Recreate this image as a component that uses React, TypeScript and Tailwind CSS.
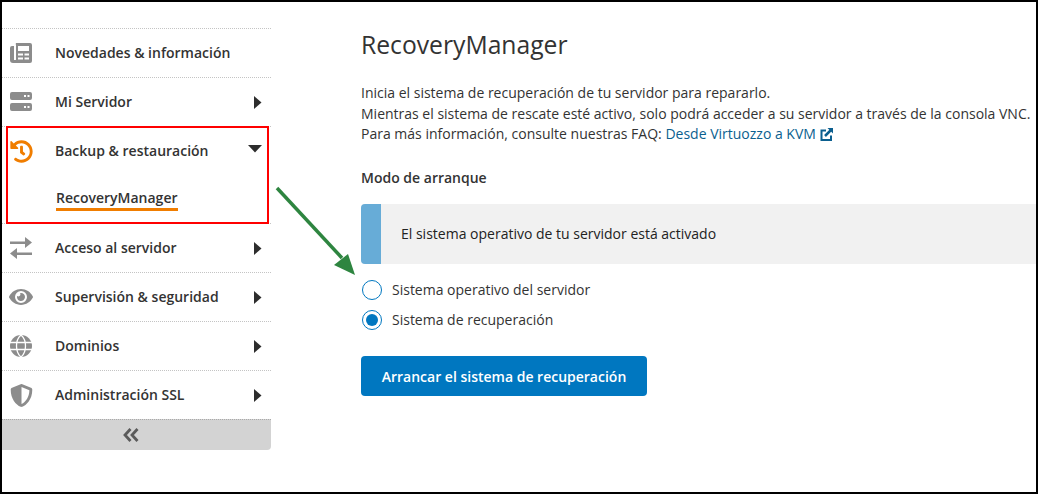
import React from 'react';
import { FaHistory, FaEye, FaShieldAlt } from 'react-icons/fa';

const NewsIcon = () => (
  <svg width="22" height="20" viewBox="0 0 22 20" fill="#8c8c8c">
    <path fillRule="evenodd" d="M6 0h14a2 2 0 0 1 2 2v16a2 2 0 0 1-2 2H3a3 3 0 0 1-3-3V5a2 2 0 0 1 2-2h2v14h1.500a.5.5 0 0 0 .5-.5V2a2 2 0 0 1 0-2ZM8 3v5h11V3H8Zm0 7.500v2h5v-2H8Zm6.500 0v2H19v-2h-4.500ZM8 14.500v2h5v-2H8Zm6.500 0v2H19v-2h-4.500Z" />
  </svg>
);

const ServerIcon = () => (
  <svg width="22" height="20" viewBox="0 0 22 20" fill="#8c8c8c">
    <path fillRule="evenodd" d="M2 0h18a2 2 0 0 1 2 2v4a2 2 0 0 1-2 2H2a2 2 0 0 1-2-2V2a2 2 0 0 1 2-2Zm12 3v2h2V3h-2Zm3.500 0v2h2V3h-2ZM2 11h18a2 2 0 0 1 2 2v4a2 2 0 0 1-2 2H2a2 2 0 0 1-2-2v-4a2 2 0 0 1 2-2Zm12 3v2h2v-2h-2Zm3.500 0v2h2v-2h-2Z" />
  </svg>
);

const SwapIcon = () => (
  <svg width="22" height="22" viewBox="0 0 22 22" fill="#8c8c8c">
    <path d="M0 4.500h15V0l7 5.500-7 5.500V7H0ZM22 15.500V18H7v4l-7-5.500L7 11v4.500Z" />
  </svg>
);

const GlobeIcon = () => (
  <svg width="22" height="22" viewBox="0 0 22 22">
    <circle cx="11" cy="11" r="11" fill="#8c8c8c" />
    <g stroke="#fff" strokeWidth="1.300" fill="none">
      <path d="M0 7.500h22M0 14.500h22" />
      <path d="M11 0c-6 5-6 17 0 22M11 0c6 5 6 17 0 22" />
    </g>
  </svg>
);

const LinkIcon = () => (
  <svg width="13" height="13" viewBox="0 0 13 13" className="inline -mt-[3px]" fill="none" stroke="#0b5f8f" strokeWidth="2">
    <path d="M6 2.500H1.500v9.500h9.500V7.500" />
    <path d="M5 8l6-6" strokeWidth="2.500" />
    <path d="M7.500 0H13v5.500Z" fill="#0b5f8f" stroke="none" />
  </svg>
);

const CaretRight = () => (
  <svg width="8" height="13" viewBox="0 0 8 13" fill="#2d2d2d"><path d="M0 0l7.500 6.500L0 13Z" /></svg>
);

const Row = ({ icon, label, arrow = true }: { icon: React.ReactNode; label: string; arrow?: boolean }) => (
  <div className="h-[49px] flex items-center border-t border-dotted border-[#c4c4c4] pl-2 pr-[9px]">
    <span className="w-[45px] flex justify-start text-[#8c8c8c]">{icon}</span>
    <span className="flex-1 text-[14px] font-semibold text-[#333] -mt-[2px]">{label}</span>
    {arrow && <CaretRight />}
  </div>
);

export default function App() {
  return (
    <div className="relative w-[1038px] h-[494px] border-2 border-black bg-white overflow-hidden flex font-['Open_Sans',sans-serif]">
      <aside className="w-[269px] shrink-0 pt-[26px]">
        <Row icon={<NewsIcon />} label="Novedades & información" arrow={false} />
        <Row icon={<ServerIcon />} label="Mi Servidor" />
        <div className="h-[97px] border-t border-dotted border-[#c4c4c4] pl-2 pr-[9px] flex flex-col">
          <div className="h-[49px] flex items-center">
            <span className="w-[45px] text-[#f07d00]"><FaHistory className="w-[23px] h-[23px]" /></span>
            <span className="flex-1 text-[14px] font-semibold text-[#333] -mt-[2px]">Backup & restauración</span>
            <svg width="14" height="8" viewBox="0 0 14 8" fill="#2d2d2d" className="-mt-[5px]"><path d="M0 0h14L7 7.500Z" /></svg>
          </div>
          <div className="pl-[46px] pt-[9px]">
            <span className="inline-block text-[14px] font-semibold text-[#333] leading-[20px] border-b-[3px] border-[#f07d00]">RecoveryManager</span>
          </div>
        </div>
        <Row icon={<SwapIcon />} label="Acceso al servidor" />
        <Row icon={<FaEye className="w-[24px] h-[24px] -ml-[1px]" />} label="Supervisión & seguridad" />
        <Row icon={<GlobeIcon />} label="Dominios" />
        <Row icon={<FaShieldAlt className="w-[23px] h-[23px]" />} label="Administración SSL" />
        <div className="h-[31px] bg-[#d3d3d3] border-t border-dotted border-[#aaa] rounded-br-[4px] flex items-center justify-center pr-[12px] text-[#555]">
          <svg width="16" height="14" viewBox="0 0 16 14" fill="none" stroke="#5a5a5a" strokeWidth="2.800">
            <path d="M7.500 1L2 7l5.500 6M14.500 1L9 7l5.500 6" />
          </svg>
        </div>
      </aside>

      <main className="flex-1 pl-[90px] pt-[25px] text-[14px] text-[#333] min-w-0">
        <h1 className="text-[24.700px] font-medium leading-[36px] text-[#333]">RecoveryManager</h1>
        <div className="mt-[20px] leading-[20.700px] whitespace-nowrap">
          <p>Inicia el sistema de recuperación de tu servidor para repararlo.</p>
          <p>Mientras el sistema de rescate esté activo, solo podrá acceder a su servidor a través de la consola VNC.</p>
          <p>
            Para más información, consulte nuestras FAQ:{' '}
            <a className="text-[#0b5f8f]">Desde Virtuozzo a KVM <LinkIcon /></a>
          </p>
        </div>
        <h2 className="mt-[22px] font-semibold leading-[21px]">Modo de arranque</h2>
        <div className="mt-[16px] h-[60px] bg-[#f1f1f1] rounded-l-[4px] flex items-center overflow-hidden">
          <span className="w-[20px] h-full bg-[#67acd7] shrink-0" />
          <span className="ml-5 -mt-[2px] text-[#222]">El sistema operativo de tu servidor está activado</span>
        </div>
        <div className="mt-[16px] ml-[1px] flex flex-col gap-[10px]">
          <label className="flex items-center gap-[10px] h-[20px]">
            <span className="w-[20px] h-[20px] rounded-full border border-[#0077c0] bg-white" />
            <span className="-mt-[1px]">Sistema operativo del servidor</span>
          </label>
          <label className="flex items-center gap-[10px] h-[20px]">
            <span className="w-[20px] h-[20px] rounded-full border border-[#0077c0] bg-white flex items-center justify-center">
              <span className="w-[12px] h-[12px] rounded-full bg-[#0077c0]" />
            </span>
            <span className="-mt-[1px]">Sistema de recuperación</span>
          </label>
        </div>
        <button className="mt-[26px] h-[40px] w-[286px] rounded-[4px] bg-[#0077c0] text-white font-semibold text-[14px]">
          Arrancar el sistema de recuperación
        </button>
      </main>

      <div className="absolute left-[4px] top-[124px] w-[263px] h-[98px] border-2 border-[#f00] pointer-events-none" />
      <svg className="absolute left-[270px] top-[180px]" width="90" height="95" viewBox="0 0 90 95">
        <path d="M5 6 L70 76" stroke="#2e8540" strokeWidth="3.500" fill="none" />
        <path d="M83 93 L62 83 L76 72 Z" fill="#2e8540" />
      </svg>
    </div>
  );
}
